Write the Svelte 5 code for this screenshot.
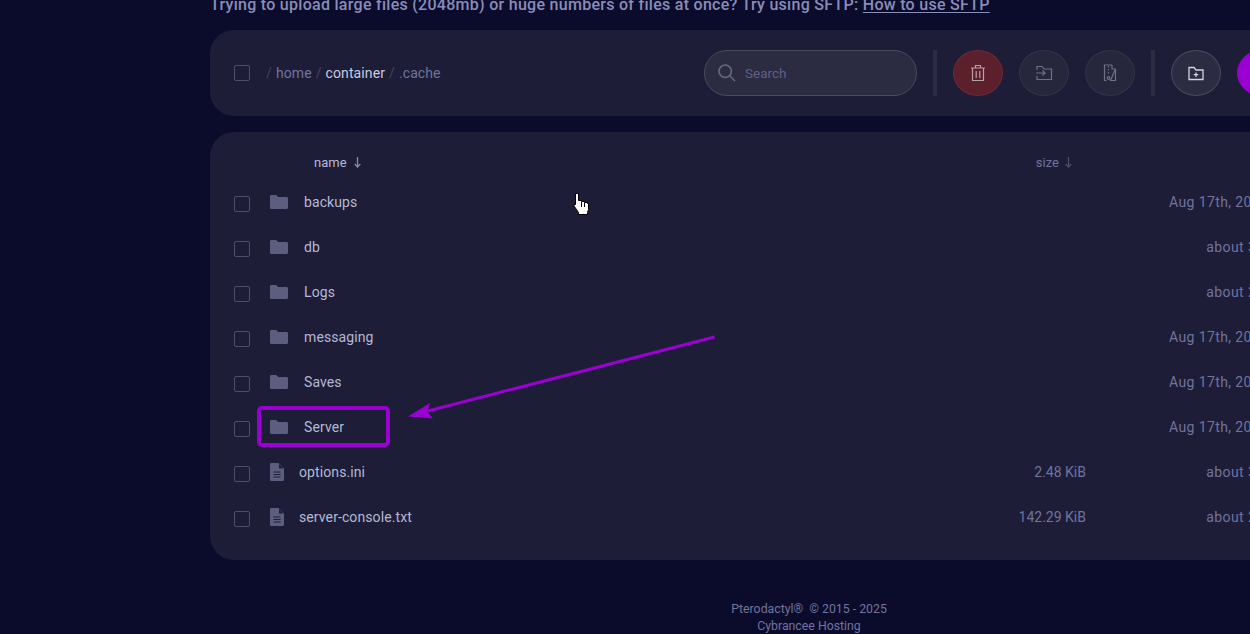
<script>
  const entries = [
    { name: "backups", dir: true, size: "", date: "Aug 17th, 2025 at 12:13" },
    { name: "db", dir: true, size: "", date: "about 3 hours ago" },
    { name: "Logs", dir: true, size: "", date: "about 2 hours ago" },
    { name: "messaging", dir: true, size: "", date: "Aug 17th, 2025 at 12:13" },
    { name: "Saves", dir: true, size: "", date: "Aug 17th, 2025 at 12:13" },
    { name: "Server", dir: true, size: "", date: "Aug 17th, 2025 at 12:13" },
    { name: "options.ini", dir: false, size: "2.48 KiB", date: "about 3 hours ago" },
    { name: "server-console.txt", dir: false, size: "142.29 KiB", date: "about 2 hours ago" },
  ];
</script>

<main>
  <p class="notice">Trying to upload large files (2048mb) or huge numbers of files at once? Try using SFTP: <u>How to use SFTP</u></p>

  <section class="card toolbar">
    <span class="check"></span>
    <nav class="crumbs">
      <span class="sep">/</span><span>home</span><span class="sep">/</span><span class="now">container</span><span class="sep">/</span><span>.cache</span>
    </nav>
    <div class="actions">
      <div class="search">
        <svg width="20" height="20" viewBox="0 0 20 20" fill="none" stroke="#67677f" stroke-width="1.6"><circle cx="8.200" cy="8.200" r="6.200"/><path d="M12.800 12.800 18 18"/></svg>
        <span>Search</span>
      </div>
      <i class="divider"></i>
      <button class="round danger" aria-label="Delete">
        <svg width="16" height="18" viewBox="0 0 16 18" fill="none" stroke="#b9a0a8" stroke-width="1.200"><path d="M1 4h14M5.500 4V1.500h5V4M2.500 4v12.500h11V4M6.200 7v7M9.800 7v7"/></svg>
      </button>
      <button class="round" aria-label="Move">
        <svg width="18" height="16" viewBox="0 0 18 16" fill="none" stroke="#6f6f85" stroke-width="1.200"><path d="M2 5V1.500h5l2 2.500h7.500v10.500H2V11M1 8h9M7.500 5.500 10 8l-2.500 2.500"/></svg>
      </button>
      <button class="round" aria-label="Archive">
        <svg width="14" height="18" viewBox="0 0 14 18" fill="none" stroke="#6f6f85" stroke-width="1.200"><path d="M9 1H1.500v15.500h2M7.500 16.500h5V5zM9 1v4h3.500M5.500 2v1.500M5.500 5v1.500M5.500 8v1.500"/><circle cx="5.500" cy="14" r="1.300"/></svg>
      </button>
      <i class="divider"></i>
      <button class="round add" aria-label="New folder">
        <svg width="16" height="15" viewBox="0 0 16 15" fill="none" stroke="#d3d3de" stroke-width="1.300"><path d="M1 13.500V1.500h5l2 2.500h7v9.500zM8 6.500v4.500M5.700 8.700h4.600"/></svg>
      </button>
      <button class="round primary" aria-label="Upload"></button>
    </div>
  </section>

  <section class="card list">
    <div class="head">
      <span class="h-name">name
        <svg width="7" height="11" viewBox="0 0 7 11" fill="none" stroke="#8a8aa0" stroke-width="1.300"><path d="M3.500 0v10M.7 7 3.500 10 6.300 7"/></svg>
      </span>
      <span class="h-size">size
        <svg width="7" height="11" viewBox="0 0 7 11" fill="none" stroke="#4e4e6a" stroke-width="1.300"><path d="M3.500 0v10M.7 7 3.500 10 6.300 7"/></svg>
      </span>
    </div>
    {#each entries as entry}
      <div class="row">
        <span class="check"></span>
        {#if entry.dir}
          <svg class="folder" width="18" height="14" viewBox="0 0 18 14"><path fill="#5d5d80" d="M0 1.500C0 .6.600 0 1.500 0h4.700l2 2h8.300c.9 0 1.500.6 1.500 1.500v9c0 .9-.6 1.500-1.500 1.500h-15C.6 14 0 13.400 0 12.500z"/></svg>
        {:else}
          <svg class="file" width="14" height="18" viewBox="0 0 14 18"><path fill="#5d5d80" fill-rule="evenodd" d="M1.500 0H8.500L14 5.500V16.500c0 .9-.6 1.500-1.500 1.500h-11C.6 18 0 17.400 0 16.500V1.500C0 .6.600 0 1.500 0zM9 1v4.500h4.500zM3.500 8.500v1h7v-1zM3.500 11v1h7v-1zM3.500 13.500v1h7v-1z"/></svg>
        {/if}
        <span class="name">{entry.name}</span>
        <span class="size">{entry.size}</span>
        <span class="date">{entry.date}</span>
      </div>
    {/each}
  </section>

  <footer>
    <div>Pterodactyl® &nbsp;© 2015 - 2025</div>
    <div>Cybrancee Hosting</div>
  </footer>

  <!-- screenshot annotation -->
  <div class="mark"></div>
  <svg class="arrow" width="320" height="90" viewBox="400 330 320 90">
    <path d="M714.500 337 428 411" stroke="#9a00d2" stroke-width="3" fill="none"/>
    <path d="M408 416.500 430 403 427.500 412 433 418.500z" fill="#9a00d2"/>
  </svg>
  <svg class="hand" width="16" height="23" viewBox="0 0 16 23">
    <path d="M2.500.5h3v7h3v1h3v1h3v1h1v6l-1 3v2h-9v-2l-2-3L1 13v-1.500h1.500z" fill="#fff" stroke="#000" stroke-width="1"/>
    <path d="M8.500 9v5M11.500 10v4" stroke="#000" stroke-width="1" fill="none"/>
  </svg>
</main>

<style>
  :global(body) {
    background: #0b0c2c;
    overflow: hidden;
    font-family: Roboto, "Liberation Sans", sans-serif;
  }

  main {
    position: relative;
    display: flow-root;
    width: 1198px;
    height: 634px;
    margin-left: 210px;
    font-size: 14px;
    color: #b5b8d6;
  }

  .notice {
    height: 29px;
    margin: -7px 0 0;
    font-size: 16px;
    line-height: 24px;
    font-weight: 500;
    letter-spacing: .28px;
    color: #8a8db8;
    white-space: nowrap;
  }
  .notice u { text-underline-offset: 2px; }

  .card {
    background: #1d1d37;
    border-radius: 24px;
  }

  .toolbar {
    display: flex;
    align-items: center;
    height: 86px;
    margin-top: 8px;
    padding: 0 24px;
  }

  .check {
    flex: none;
    box-sizing: border-box;
    width: 16px;
    height: 16px;
    border: 1px solid #4e4e64;
    border-radius: 2px;
  }

  .crumbs {
    flex: none;
    display: flex;
    gap: 4px;
    width: 438px;
    margin-left: 16px;
    letter-spacing: .1px;
    color: #71739f;
  }
  .crumbs .sep { color: #43435f; }
  .crumbs .now { color: #c9cbe0; }

  .actions {
    display: flex;
    align-items: center;
    gap: 16px;
  }

  .search {
    box-sizing: border-box;
    flex: none;
    display: flex;
    align-items: center;
    gap: 8px;
    width: 213px;
    height: 46px;
    padding-left: 12px;
    font-size: 13.500px;
    background: #2b2b42;
    border: 1px solid #4a4a60;
    border-radius: 23px;
    color: #5e6088;
  }

  .divider {
    flex: none;
    width: 4px;
    height: 46px;
    background: #2b2b42;
  }

  .round {
    box-sizing: border-box;
    flex: none;
    display: grid;
    place-items: center;
    width: 50px;
    height: 46px;
    padding: 0;
    background: #26263d;
    border: 1px solid #33334a;
    border-radius: 50%;
  }
  .round.danger {
    background: #5c1f2c;
    border-color: #6e2a36;
  }
  .round.add {
    background: #2b2b42;
    border-color: #4a4a60;
  }
  .round.primary {
    background: #9a00d2;
    border-color: #9a00d2;
  }

  .list {
    box-sizing: border-box;
    height: 428px;
    margin-top: 16px;
    padding-top: 8px;
  }

  .head {
    box-sizing: border-box;
    display: flex;
    align-items: center;
    height: 40px;
    padding-top: 4px;
    font-size: 13px;
  }
  .head svg { margin-left: 3px; vertical-align: -1px; }
  .h-name { margin-left: 104px; color: #b5b8d6; }
  .h-name svg { margin-left: 4px; }
  .h-size { margin-left: 675px; color: #71739f; }

  .row {
    display: flex;
    align-items: center;
    height: 45px;
    padding-left: 24px;
  }
  .row .check { margin-top: 2px; }
  .folder, .file { flex: none; margin-left: 20px; margin-top: -2px; }
  .folder { margin-right: 16px; }
  .file { margin-right: 15px; }

  .name {
    flex: none;
    width: 300px;
    margin-top: -2px;
    letter-spacing: .1px;
  }
  .size {
    flex: 1;
    text-align: right;
    margin-top: -2px;
    color: #71739f;
  }
  .date {
    flex: none;
    width: 240px;
    padding-right: 82px;
    text-align: right;
    margin-top: -2px;
    letter-spacing: .4px;
    color: #71739f;
  }

  footer {
    margin-top: 41px;
    text-align: center;
    font-size: 12.300px;
    line-height: 17px;
    color: #71739f;
  }

  .mark {
    position: absolute;
    left: 47px;
    top: 406px;
    box-sizing: border-box;
    width: 133px;
    height: 41px;
    border: 4px solid #9a00d2;
    border-radius: 5px;
  }
  .arrow {
    position: absolute;
    left: 190px;
    top: 330px;
  }
  .hand {
    position: absolute;
    left: 363px;
    top: 193px;
  }
</style>
